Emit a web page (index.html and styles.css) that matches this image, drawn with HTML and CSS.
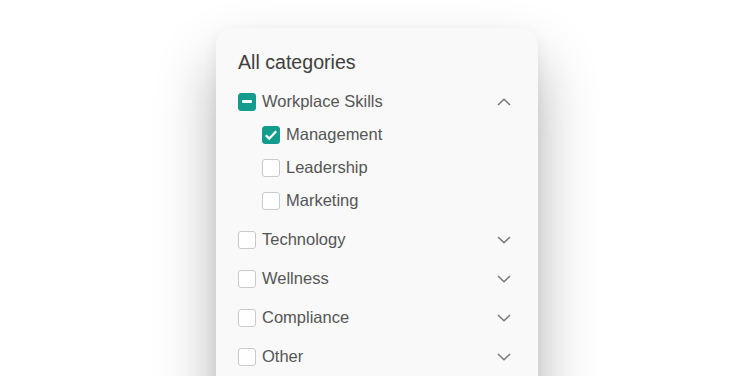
FILE: index.html
```html
<!DOCTYPE html>
<html>
<head>
<meta charset="utf-8">
<link rel="stylesheet" href="styles.css">
</head>
<body>
<div class="card">
  <div class="title">All categories</div>
  <div class="list">
    <div class="group">
      <div class="row">
        <span class="box box-mixed"><span class="bar"></span></span>
        <span class="label">Workplace Skills</span>
        <svg class="chev" width="14" height="8" viewBox="0 0 14 8"><path d="M1 7L7 1.2L13 7" fill="none" stroke="#777" stroke-width="1.5"/></svg>
      </div>
      <div class="row sub">
        <span class="box box-on"><svg width="14" height="12" viewBox="0 0 14 12"><path d="M1.8 6.2L5.2 9.6L12.2 2.2" fill="none" stroke="#fff" stroke-width="2.2"/></svg></span>
        <span class="label">Management</span>
      </div>
      <div class="row sub">
        <span class="box"></span>
        <span class="label">Leadership</span>
      </div>
      <div class="row sub">
        <span class="box"></span>
        <span class="label">Marketing</span>
      </div>
    </div>
    <div class="group">
      <div class="row">
        <span class="box"></span>
        <span class="label">Technology</span>
        <svg class="chev" width="14" height="8" viewBox="0 0 14 8"><path d="M1 1L7 6.8L13 1" fill="none" stroke="#777" stroke-width="1.5"/></svg>
      </div>
    </div>
    <div class="group">
      <div class="row">
        <span class="box"></span>
        <span class="label">Wellness</span>
        <svg class="chev" width="14" height="8" viewBox="0 0 14 8"><path d="M1 1L7 6.8L13 1" fill="none" stroke="#777" stroke-width="1.5"/></svg>
      </div>
    </div>
    <div class="group">
      <div class="row">
        <span class="box"></span>
        <span class="label">Compliance</span>
        <svg class="chev" width="14" height="8" viewBox="0 0 14 8"><path d="M1 1L7 6.8L13 1" fill="none" stroke="#777" stroke-width="1.5"/></svg>
      </div>
    </div>
    <div class="group">
      <div class="row">
        <span class="box"></span>
        <span class="label">Other</span>
        <svg class="chev" width="14" height="8" viewBox="0 0 14 8"><path d="M1 1L7 6.8L13 1" fill="none" stroke="#777" stroke-width="1.5"/></svg>
      </div>
    </div>
  </div>
</div>
</body>
</html>
```

FILE: styles.css
```css
html, body {
  margin: 0;
  padding: 0;
  background: #ffffff;
  height: 100%;
  overflow: hidden;
}
body {
  font-family: "Liberation Sans", Arial, sans-serif;
}
.card {
  width: 322px;
  margin: 28px auto 0;
  box-sizing: border-box;
  background: #f9f9f9;
  border-radius: 16px;
  padding: 22px 27px 40px 22px;
  box-shadow: 0 34px 60px rgba(0, 0, 0, 0.3), 0 4px 14px rgba(0, 0, 0, 0.05);
  position: relative;
  left: 1px;
}
.title {
  font-size: 19.6px;
  line-height: 24px;
  color: #404040;
  margin-bottom: 11px;
}
.list {
  display: flex;
  flex-direction: column;
  gap: 6px;
}
.group {
  display: flex;
  flex-direction: column;
}
.row {
  height: 33px;
  display: flex;
  align-items: center;
}
.row.sub {
  padding-left: 24px;
}
.box {
  width: 18px;
  height: 18px;
  box-sizing: border-box;
  border: 1.5px solid #cacaca;
  border-radius: 3px;
  background: #ffffff;
  display: flex;
  align-items: center;
  justify-content: center;
  flex: none;
}
.box-mixed, .box-on {
  background: #139b8d;
  border-color: #139b8d;
}
.bar {
  width: 10px;
  height: 2.2px;
  background: #ffffff;
  border-radius: 1px;
}
.label {
  margin-left: 6px;
  font-size: 16.5px;
  color: #555555;
  flex: 1;
}
.chev {
  flex: none;
}
```
